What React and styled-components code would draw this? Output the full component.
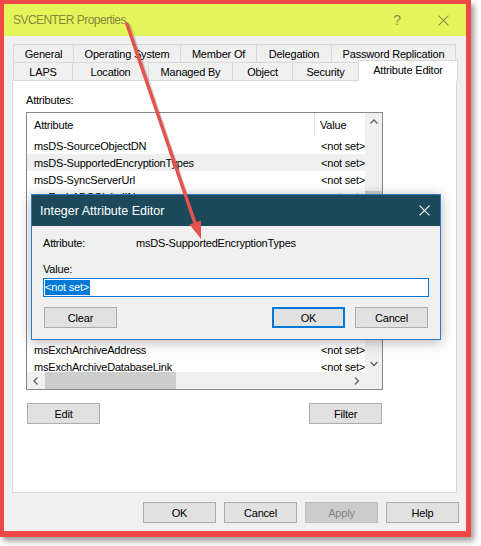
import React from "react";
import styled, { createGlobalStyle } from "styled-components";

const GlobalStyle = createGlobalStyle`
  html, body {
    margin: 0;
    padding: 0;
    background: #ffffff;
  }
  body {
    font-family: "Liberation Sans", Arial, sans-serif;
    font-size: 11px;
    letter-spacing: -0.2px;
    color: #000;
  }
  * {
    box-sizing: border-box;
  }
`;

const Page = styled.div`
  position: relative;
  width: 481px;
  height: 546px;
  overflow: hidden;
`;

const Window = styled.div`
  position: relative;
  width: 471px;
  display: flex;
  flex-direction: column;
  background: #f0f0f0;
  border-style: solid;
  border-color: #f04848;
  border-width: 4px 5px 6px 4px;
  box-shadow: 3px 4px 6px rgba(0, 0, 0, 0.4);
`;

const TitleBar = styled.div`
  height: 32px;
  display: flex;
  align-items: center;
  background: #e4f55c;
  padding-left: 9px;
`;

const Title = styled.div`
  flex: 1;
  font-size: 12px;
  letter-spacing: -0.55px;
  color: #848b3e;
`;

const CaptionButton = styled.div`
  width: 46px;
  height: 32px;
  display: flex;
  align-items: center;
  justify-content: center;
  font-size: 14px;
  color: #8a9145;
`;

const Body = styled.div`
  display: flex;
  flex-direction: column;
  padding: 8px 7px 8px 8px;
`;

const TabRow = styled.div`
  display: flex;
  height: 18px;
  margin-left: 1px;
`;

const Tab = styled.div`
  position: relative;
  flex: 0 0 ${(p) => p.$w}px;
  height: ${(p) => (p.$active ? 21 : 18)}px;
  margin-top: ${(p) => (p.$active ? -2 : 0)}px;
  display: flex;
  align-items: center;
  justify-content: center;
  padding-bottom: ${(p) => (p.$active ? 3 : 0)}px;
  background: ${(p) => (p.$active ? "#ffffff" : "#f0f0f0")};
  border: 1px solid #d9d9d9;
  border-bottom: none;
  z-index: ${(p) => (p.$active ? 2 : 0)};
  white-space: nowrap;

  & + & {
    margin-left: -1px;
  }
`;

const Panel = styled.div`
  width: 445px;
  height: 413px;
  background: #ffffff;
  border: 1px solid #d9d9d9;
  padding: 12px 0 0 13px;
  display: flex;
  flex-direction: column;
`;

const Label = styled.div`
  line-height: 15px;
  margin-bottom: 4px;
`;

const ListBox = styled.div`
  width: 357px;
  height: 278px;
  border: 1px solid #828790;
  display: grid;
  grid-template-columns: 1fr 17px;
  grid-template-rows: 1fr 17px;
  background: #ffffff;
`;

const ListMain = styled.div`
  display: flex;
  flex-direction: column;
  overflow: hidden;
`;

const HeaderRow = styled.div`
  flex: 0 0 24px;
  display: flex;
  align-items: stretch;
`;

const HeaderCell = styled.div`
  flex: 0 0 ${(p) => p.$w}px;
  display: flex;
  align-items: center;
  padding-left: ${(p) => p.$pad}px;
  border-right: ${(p) => (p.$divider ? "1px solid #e5e5e5" : "none")};
  overflow: hidden;
  white-space: nowrap;
`;

const Rows = styled.div`
  flex: 1;
  overflow: hidden;
`;

const Row = styled.div`
  height: 17px;
  display: flex;
  align-items: center;
  background: ${(p) => (p.$hover ? "#f0f0f0" : "transparent")};
`;

const Cell = styled.div`
  flex: 0 0 ${(p) => p.$w}px;
  padding-left: ${(p) => p.$pad}px;
  overflow: hidden;
  white-space: nowrap;
`;

const VScroll = styled.div`
  display: flex;
  flex-direction: column;
  background: #f0f0f0;
`;

const HScroll = styled.div`
  display: flex;
  background: #f0f0f0;
`;

const ArrowCell = styled.div`
  flex: 0 0 17px;
  height: 17px;
  display: flex;
  align-items: center;
  justify-content: center;
`;

const VTrack = styled.div`
  flex: 1;
  padding-top: 61px;
`;

const VThumb = styled.div`
  height: 45px;
  background: #cdcdcd;
`;

const HTrack = styled.div`
  flex: 1;
  padding-left: 1px;
  display: flex;
  align-items: stretch;
`;

const HThumb = styled.div`
  width: 131px;
  background: #cdcdcd;
`;

const Corner = styled.div`
  background: #f0f0f0;
`;

const ListButtons = styled.div`
  width: 357px;
  margin-top: 13px;
  display: flex;
  justify-content: space-between;
  padding: 0 1px;
`;

const Button = styled.div`
  width: 73px;
  height: 21px;
  display: flex;
  align-items: center;
  justify-content: center;
  background: ${(p) => (p.$disabled ? "#cccccc" : "#e1e1e1")};
  border: ${(p) => (p.$primary ? "2px solid #0078d7" : p.$disabled ? "1px solid #bfbfbf" : "1px solid #adadad")};
  color: ${(p) => (p.$disabled ? "#838383" : "#000")};
`;

const FooterButtons = styled.div`
  margin-top: 9px;
  display: flex;
  justify-content: flex-end;
  gap: 8px;
`;

const Dialog = styled.div`
  position: absolute;
  left: 27px;
  top: 190px;
  width: 410px;
  z-index: 5;
  display: flex;
  flex-direction: column;
  background: #f0f0f0;
  border: 1px solid #2f7cc4;
  box-shadow: 0 2px 12px rgba(0, 0, 0, 0.3);
`;

const DialogTitleBar = styled.div`
  height: 31px;
  display: flex;
  align-items: center;
  background: #1c4a5b;
  padding-left: 8px;
`;

const DialogTitle = styled.div`
  flex: 1;
  font-size: 12.5px;
  letter-spacing: 0;
  color: #ffffff;
`;

const DialogClose = styled.div`
  width: 32px;
  height: 31px;
  display: flex;
  align-items: center;
  justify-content: center;
`;

const DialogBody = styled.div`
  display: flex;
  flex-direction: column;
  padding: 9px 12px 11px 11px;
`;

const InfoRow = styled.div`
  display: flex;
  line-height: 16px;
`;

const InfoLabel = styled.div`
  flex: 0 0 93px;
`;

const ValueLabel = styled.div`
  margin-top: 10px;
  line-height: 16px;
`;

const ValueInput = styled.div`
  margin-top: 1px;
  width: 386px;
  height: 19px;
  display: flex;
  align-items: center;
  padding-left: 1px;
  background: #ffffff;
  border: 1px solid #0078d7;
`;

const Selection = styled.span`
  background: #0078d7;
  color: #ffffff;
  line-height: 15px;
  padding-right: 1px;
`;

const DialogButtons = styled.div`
  margin-top: 10px;
  display: flex;
  gap: 10px;
  padding-left: 1px;

  & > :first-child {
    margin-right: auto;
  }
`;

const Overlay = styled.svg`
  position: absolute;
  left: 0;
  top: 0;
  z-index: 10;
  pointer-events: none;
`;

const Chevron = ({ dir }) => {
  const pts = {
    up: "0.5,4.5 4,1 7.5,4.5",
    down: "0.5,1 4,4.5 7.5,1",
    left: "4.5,0.5 1,4 4.5,7.5",
    right: "1,0.5 4.5,4 1,7.5",
  }[dir];
  const vertical = dir === "up" || dir === "down";
  return (
    <svg width={vertical ? 8 : 6} height={vertical ? 6 : 8}>
      <polyline points={pts} fill="none" stroke="#606060" strokeWidth="1.3" />
    </svg>
  );
};

const CloseIcon = ({ color, size }) => (
  <svg width={size} height={size} viewBox="0 0 10 10">
    <path d="M0.5 0.5 L9.5 9.5 M9.5 0.5 L0.5 9.5" stroke={color} strokeWidth="1" fill="none" />
  </svg>
);

const topTabs = [
  { label: "General", w: 61 },
  { label: "Operating System", w: 108 },
  { label: "Member Of", w: 77 },
  { label: "Delegation", w: 76 },
  { label: "Password Replication", w: 125 },
];

const bottomTabs = [
  { label: "LAPS", w: 60 },
  { label: "Location", w: 77 },
  { label: "Managed By", w: 85 },
  { label: "Object", w: 61 },
  { label: "Security", w: 67 },
  { label: "Attribute Editor", w: 100, active: true },
];

// rows hidden behind the editor dialog are left blank
const attributes = [
  { name: "msDS-SourceObjectDN", value: "<not set>" },
  { name: "msDS-SupportedEncryptionTypes", value: "<not set>" },
  { name: "msDS-SyncServerUrl", value: "<not set>" },
  { name: "msExchABCGlobalIN", value: "<not set>" },
  { name: "", value: "" },
  { name: "", value: "" },
  { name: "", value: "" },
  { name: "", value: "" },
  { name: "", value: "" },
  { name: "", value: "" },
  { name: "", value: "" },
  { name: "", value: "" },
  { name: "msExchArchiveAddress", value: "<not set>" },
  { name: "msExchArchiveDatabaseLink", value: "<not set>" },
];

const App = () => {
  return (
    <Page>
      <GlobalStyle />
      <Window>
        <TitleBar>
          <Title>SVCENTER Properties</Title>
          <CaptionButton>?</CaptionButton>
          <CaptionButton>
            <CloseIcon color="#8a9145" size={11} />
          </CaptionButton>
        </TitleBar>
        <Body>
          <TabRow>
            {topTabs.map((t) => (
              <Tab key={t.label} $w={t.w}>
                {t.label}
              </Tab>
            ))}
          </TabRow>
          <TabRow>
            {bottomTabs.map((t) => (
              <Tab key={t.label} $w={t.w} $active={t.active}>
                {t.label}
              </Tab>
            ))}
          </TabRow>
          <Panel>
            <Label>Attributes:</Label>
            <ListBox>
              <ListMain>
                <HeaderRow>
                  <HeaderCell $w={288} $pad={7} $divider>
                    Attribute
                  </HeaderCell>
                  <HeaderCell $w={50} $pad={5}>
                    Value
                  </HeaderCell>
                </HeaderRow>
                <Rows>
                  {attributes.map((a, i) => (
                    <Row key={i} $hover={i === 1}>
                      <Cell $w={288} $pad={7}>
                        {a.name}
                      </Cell>
                      <Cell $w={50} $pad={6}>
                        {a.value}
                      </Cell>
                    </Row>
                  ))}
                </Rows>
              </ListMain>
              <VScroll>
                <ArrowCell>
                  <Chevron dir="up" />
                </ArrowCell>
                <VTrack>
                  <VThumb />
                </VTrack>
                <ArrowCell>
                  <Chevron dir="down" />
                </ArrowCell>
              </VScroll>
              <HScroll>
                <ArrowCell>
                  <Chevron dir="left" />
                </ArrowCell>
                <HTrack>
                  <HThumb />
                </HTrack>
                <ArrowCell>
                  <Chevron dir="right" />
                </ArrowCell>
              </HScroll>
              <Corner />
            </ListBox>
            <ListButtons>
              <Button>Edit</Button>
              <Button>Filter</Button>
            </ListButtons>
          </Panel>
          <FooterButtons>
            <Button>OK</Button>
            <Button>Cancel</Button>
            <Button $disabled>Apply</Button>
            <Button>Help</Button>
          </FooterButtons>
        </Body>

        <Dialog>
          <DialogTitleBar>
            <DialogTitle>Integer Attribute Editor</DialogTitle>
            <DialogClose>
              <CloseIcon color="#ffffff" size={11} />
            </DialogClose>
          </DialogTitleBar>
          <DialogBody>
            <InfoRow>
              <InfoLabel>Attribute:</InfoLabel>
              <div>msDS-SupportedEncryptionTypes</div>
            </InfoRow>
            <ValueLabel>Value:</ValueLabel>
            <ValueInput>
              <Selection>&lt;not set&gt;</Selection>
            </ValueInput>
            <DialogButtons>
              <Button>Clear</Button>
              <Button $primary>OK</Button>
              <Button>Cancel</Button>
            </DialogButtons>
          </DialogBody>
        </Dialog>
      </Window>

      <Overlay width="481" height="546" viewBox="0 0 481 546">
        <line x1="129" y1="26" x2="196" y2="225" stroke="rgba(0,0,0,0.18)" strokeWidth="4" strokeLinecap="round" />
        <line x1="127" y1="24" x2="195" y2="223" stroke="#e6534e" strokeWidth="3.5" strokeLinecap="round" />
        <polygon points="201,239 189.5,224.5 201,220.5" fill="#e6534e" />
      </Overlay>
    </Page>
  );
};

export default App;
